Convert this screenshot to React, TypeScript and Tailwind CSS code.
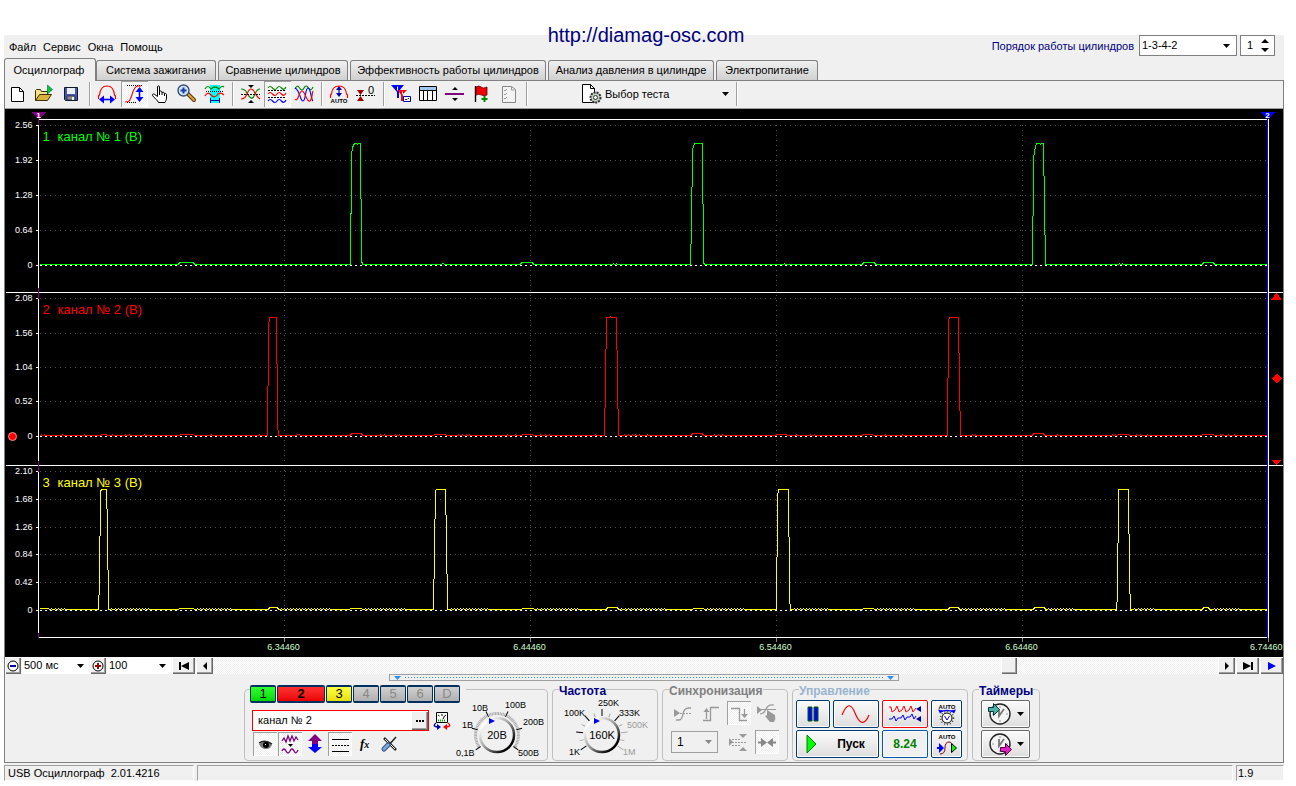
import clsx from "clsx";
import React from "react";

const DITHER =
  "bg-[repeating-conic-gradient(#ffffff_0_25%,#f0f0f0_0_50%)] bg-[length:2px_2px]";

const tabs = [
  { text: "Система зажигания", width: "w-[120px]" },
  { text: "Сравнение цилиндров", width: "w-[130px]" },
  { text: "Эффективность работы цилиндров", width: "w-[196px]" },
  { text: "Анализ давления в цилиндре", width: "w-[166px]" },
  { text: "Электропитание", width: "w-[102px]" },
];

type IconProps = { children: React.ReactNode; w?: number; h?: number };

const Icon = ({ children, w = 26, h = 24 }: IconProps) => (
  <svg width={w} height={h} viewBox={`0 0 ${w} ${h}`} fill="none" className="shrink-0">
    {children}
  </svg>
);

const Arrow = ({ className = "text-black" }: { className?: string }) => (
  <svg width="7" height="4" viewBox="0 0 7 4" className={clsx("pointer-events-none shrink-0", className)}>
    <path d="M0 0h7L3.5 4z" fill="currentColor" />
  </svg>
);

type ToolProps = { label: string; pressed?: boolean; children: React.ReactNode };

const Tool = ({ label, pressed, children }: ToolProps) => (
  <button
    aria-label={label}
    aria-pressed={pressed}
    className={clsx(
      "flex h-[26px] w-[27px] items-center",
      pressed && "shadow-[inset_1px_1px_0_#a0a0a0,inset_-1px_-1px_0_#ffffff]",
      pressed && DITHER
    )}
  >
    <Icon>{children}</Icon>
  </button>
);

const Separator = () => (
  <div className="flex h-6 w-2 justify-center">
    <div className="w-px bg-[#a0a0a0]" />
    <div className="w-px bg-white" />
  </div>
);

const Toolbar = () => (
  <div className="flex h-7 items-center border-b border-[#a0a0a0] pb-px">
    <Tool label="Новый">
      <path d="M6.5 5.5h8l4 4v10h-12z" fill="#fff" stroke="#000" />
      <path d="M14.5 5.5v4h4" stroke="#000" />
    </Tool>
    <Tool label="Открыть">
      <path d="M3.5 18.5v-10l1-1h4l1 2h6v4" fill="#f5e28c" stroke="#3a3000" />
      <path d="M3.5 18.5l4-6h12l-4 6z" fill="#d9b13c" stroke="#3a3000" />
      <path d="M15.500 3l5 4.500-5 4.500z" fill="#00cc33" stroke="#006040" strokeWidth=".6" />
    </Tool>
    <Tool label="Сохранить">
      <path d="M5.5 5.5h13v13h-12l-1-1z" fill="#4858a8" stroke="#101830" />
      <path d="M8 6h8v6H8z" fill="#e8eefc" />
      <path d="M8 14h8v4H8z" fill="#888" stroke="#101830" strokeWidth=".6" />
      <path d="M13 15h2v3h-2z" fill="#eee" />
    </Tool>
    <Separator />
    <Tool label="Ширина по курсорам">
      <path d="M4.500 17v-3l1-1c.5-5 3-9 7.500-9s7 4 7.500 9l1 1v3" stroke="#f00" strokeWidth="1.200" />
      <path d="M8 17.500h10" stroke="#00f" strokeWidth="1.600" />
      <path d="M5 17.500l5-4v8zM21 17.500l-5-4v8z" fill="#00f" />
    </Tool>
    <Tool label="Автомасштаб" pressed>
      <path d="M6 3.500h16M6 20.500h10" stroke="#000" strokeDasharray="1 1" />
      <path d="M4 20c5 0 5-2 6.500-6S13 4 17 4h3" stroke="#f00" strokeWidth="1.200" />
      <path d="M18.500 8v9" stroke="#00f" strokeWidth="1.600" />
      <path d="M18.500 5l-4 5h8zM18.500 20l-4-5h8z" fill="#00f" />
    </Tool>
    <Tool label="Рука">
      <path
        d="M9.500 14.500V5c0-1.500 2-1.500 2 0v5c0-1.500 2-1.300 2.500 0v1c.3-1.300 2-1 2.300.2v1c.4-1.200 2.200-1 2.200.6V16c0 2-1 3-1.500 4.500H10.500c-.8-2-3-3.500-5.800-6.700-1-1.500.8-2.500 2-1.400z"
        fill="#fff"
        stroke="#000"
      />
      <path d="M11.500 10v3M14 11v2M16.500 12v2" stroke="#000" />
    </Tool>
    <Tool label="Лупа">
      <path d="M13 12l6 6" stroke="#5b3c11" strokeWidth="4" strokeLinecap="round" />
      <path d="M13 12l6 6" stroke="#e0a030" strokeWidth="2" strokeLinecap="round" />
      <circle cx="8.500" cy="8.500" r="5.500" fill="#cfe4fb" stroke="#3a4f70" strokeWidth="1.400" />
      <path d="M8.500 5.500v6M5.500 8.500h6" stroke="#1040a0" strokeWidth="2" />
    </Tool>
    <Tool label="Выделение">
      <path d="M8 3h10v18H8z" fill="#0ff" />
      <path d="M3 7q2.500-5 6 0q4-4 8 0q3-4 5-2" stroke="#080" strokeWidth="1.200" />
      <path d="M4 9.500h18" stroke="#000" strokeDasharray="1 1" />
      <path d="M3 14q2.500-5 6-1q4 4 7-1q3-2 6 1" stroke="#f00" strokeWidth="1.200" />
      <path d="M8.500 16v5M17.500 16v5M9 18.500h8" stroke="#00a" />
    </Tool>
    <Separator />
    <Tool label="Наложить">
      <path d="M4 7q4 0 6 4t4 5 4-4 5-5" stroke="#080" strokeWidth="1.200" />
      <path d="M4 17q4 0 6-5t4-5 4 4 5 6" stroke="#f00" strokeWidth="1.200" />
      <path d="M4 12.500h19" stroke="#000" strokeDasharray="2 1" />
      <path d="M11 3h6l-3 3zM11 21h6l-3-3z" fill="#000" />
    </Tool>
    <Tool label="Разделить" pressed>
      <path d="M4 6q2-3 4.500 0t4.500 0 4.500 0 4.500-1" stroke="#080" strokeWidth="1.200" />
      <path d="M4 12q2-3 4.500 0t4.500 0 4.500 0 4.500-1" stroke="#f00" strokeWidth="1.200" />
      <path d="M4 19q2-3 4.500 0t4.500 0 4.500 0 4.500-1" stroke="#00f" strokeWidth="1.200" />
      <path d="M4 8.500h18M4 15.500h18" stroke="#000" strokeDasharray="2 1" />
    </Tool>
    <Tool label="Совместить">
      <path d="M4 7q2-5 4.500-1t4.500 0 4.500 0 4.500-1" stroke="#080" strokeWidth="1.200" />
      <path d="M4 6c5 2 5 13 8 13s2-13 5-13 3 12 5 13" stroke="#00f" strokeWidth="1.200" />
      <path d="M4 17c3 4 4-8 7-8s4 9 7 10 3-8 4-10" stroke="#f00" strokeWidth="1.200" />
    </Tool>
    <Separator />
    <Tool label="Авто">
      <path d="M4.500 16v-3l1-1c.5-5 3-8 7.500-8s7 3 7.500 8l1 1v3" stroke="#f00" strokeWidth="1.200" />
      <path d="M13 6v7" stroke="#00a" strokeWidth="1.200" />
      <path d="M13 4l-3 4h6zM13 15l-3-4h6z" fill="#00a" />
      <text x="13" y="21" fontSize="6" fontWeight="bold" fill="#000" textAnchor="middle">AUTO</text>
    </Tool>
    <Tool label="Ноль">
      <path d="M3 13.500h19" stroke="#000" strokeDasharray="2 1" />
      <path d="M4 8h7l-3.500 5zM4 19h7l-3.500-5z" fill="#900" />
      <text x="15" y="12" fontSize="11" fill="#000">0</text>
    </Tool>
    <Separator />
    <Tool label="Фильтр">
      <path d="M3 3h13l-5 6v7H9v-6z" fill="#00f" />
      <path d="M10 8h9l-4 4v7h-2v-6z" fill="#f00" />
      <path d="M9.500 4.500v4M14.500 9.500v3" stroke="#fff" />
      <path d="M15.500 14.500h7v5h-7z" fill="#fff" stroke="#00a" />
      <path d="M17 17.500h2l1-1h1" stroke="#000" strokeWidth=".8" />
    </Tool>
    <Tool label="Таблица">
      <path d="M4.500 4.500h17v14h-17z" fill="#fff" stroke="#000" />
      <path d="M5 5h16v3H5z" fill="#9cc8f0" />
      <path d="M5 8.500h16M8.500 8v10M12.500 8v10M17.500 8v10" stroke="#000" />
    </Tool>
    <Tool label="Линейка">
      <path d="M3 12h19" stroke="#800080" strokeWidth="2" />
      <path d="M10 8h6l-3-3zM10 16h6l-3 3z" fill="#000" />
    </Tool>
    <Tool label="Флаг">
      <path d="M6.500 4v16" stroke="#000" strokeWidth="1.400" />
      <path d="M7 5q3-2 5 0t6 0v8q-3 1.500-5.500 0T7 13z" fill="#e00" stroke="#600" strokeWidth=".8" />
      <path d="M15.500 14v6M12.500 17h6" stroke="#080" strokeWidth="2" />
    </Tool>
    <Tool label="Список">
      <path d="M6.500 4.500h9l4 3v13h-13z" fill="#f4f4f4" stroke="#888" />
      <path d="M8 8l1 1 2-2M8 12l1 1 2-2M8 16l1 1 2-2M15.500 5v3h3" stroke="#999" />
    </Tool>
    <Separator />
    <button className="flex h-6 w-[202px] items-center pr-1 pl-[50px]">
      <Icon w={22} h={22}>
        <path d="M1.500 1.500h8l4 4v14h-12z" fill="#fff" stroke="#000" />
        <path d="M9.500 1.500v4h4" stroke="#000" />
        <circle cx="14.500" cy="14.500" r="5" fill="#c4d2c4" stroke="#333" strokeWidth="2" strokeDasharray="2 1" />
        <circle cx="14.500" cy="14.500" r="2" fill="#fff" stroke="#333" />
      </Icon>
      <span className="flex-1 pl-0.5 text-left">Выбор теста</span>
      <Arrow />
    </button>
    <Separator />
  </div>
);

type Event = { x: number; points: number[][] };

/* Every trace lies on its base line; an event replaces the stretch it covers. */
const bump = (from: number, to: number, height: number): Event => ({
  x: from,
  points: [
    [from - 1, 0],
    [from, height],
    [to, height],
    [to + 1, 0],
  ],
});

const ticks = (xs: number[]) => xs.map((x) => bump(x, x, 1));

const noise = (from: number, to: number) => {
  const xs: number[] = [];
  for (let x = from; x < to; x += x % 3 ? 3 : 4) xs.push(x);
  return ticks(xs);
};

const pulse = (points: number[][]): Event => ({ x: points[0][0], points });

const toPoints = (base: number, events: Event[]) => {
  const body = [...events]
    .sort((a, b) => a.x - b.x)
    .flatMap((e) => e.points)
    .map(([x, h]) => `${x},${base - h}`);
  return [`39,${base}`, ...body, `1266,${base}`].join(" ");
};

const channels = [
  {
    name: "канал № 1 (В)",
    color: "#00ff00",
    labelY: 140,
    rows: [125, 160, 195, 230, 265],
    labels: ["2.56", "1.92", "1.28", "0.64", "0"],
    points: toPoints(264, [
      bump(179, 193, 2),
      pulse([[350, 0], [350, 51], [351, 51], [351, 109], [352, 117], [354, 121], [356, 121], [357, 120], [358, 121], [360, 121], [360, 66], [361, 65], [361, 4], [362, 0]]),
      bump(442, 443, 1),
      bump(521, 532, 2),
      ...ticks([613, 616]),
      pulse([[690, 0], [690, 20], [691, 21], [691, 77], [692, 78], [692, 115], [694, 121], [702, 121], [702, 61], [703, 60], [703, 2], [704, 0]]),
      ...ticks([784]),
      bump(863, 874, 2),
      pulse([[1032, 0], [1032, 48], [1033, 49], [1033, 106], [1035, 118], [1036, 121], [1039, 121], [1040, 120], [1041, 121], [1043, 121], [1043, 89], [1044, 88], [1044, 30], [1045, 29], [1045, 0]]),
      ...ticks([1119, 1122]),
      bump(1203, 1213, 2),
    ]),
  },
  {
    name: "канал № 2 (В)",
    color: "#ff0000",
    labelY: 313,
    rows: [298, 333, 367, 401, 436],
    labels: ["2.08", "1.56", "1.04", "0.52", "0"],
    points: toPoints(435, [
      ...ticks([41, 44, 62, 84, 112, 125, 129, 144, 211, 259]),
      bump(101, 106, 1),
      bump(180, 193, 1),
      pulse([[267, 0], [267, 49], [268, 50], [268, 108], [269, 118], [276, 118], [276, 72], [277, 71], [277, 12], [278, 0]]),
      bump(297, 299, 1),
      bump(351, 361, 2),
      ...ticks([380, 384, 395, 399, 458, 462, 466, 469, 507, 515]),
      bump(434, 445, 1),
      bump(522, 532, 1),
      ...ticks([540, 545, 549, 595]),
      pulse([[604, 0], [604, 27], [605, 28], [605, 86], [606, 87], [606, 118], [609, 118], [610, 119], [611, 118], [616, 118], [616, 86], [617, 85], [617, 27], [618, 26], [618, 0]]),
      ...ticks([624, 628, 632, 635, 639, 647]),
      bump(692, 702, 2),
      ...ticks([714, 718, 722]),
      bump(776, 786, 1),
      ...ticks([796, 810, 814, 885, 902]),
      bump(863, 872, 1),
      pulse([[947, 0], [947, 57], [948, 58], [948, 115], [949, 118], [958, 118], [958, 83], [959, 82], [959, 25], [960, 24], [960, 0]]),
      ...ticks([972, 975, 1057]),
      bump(1033, 1043, 2),
      ...ticks([1112, 1115, 1136, 1140, 1147]),
      bump(1118, 1128, 1),
      bump(1202, 1213, 1),
      ...ticks([1220, 1223, 1228, 1234]),
    ]),
  },
  {
    name: "канал № 3 (В)",
    color: "#ffff00",
    labelY: 486,
    rows: [471, 499, 527, 554, 582, 610],
    labels: ["2.10", "1.68", "1.26", "0.84", "0.42", "0"],
    points: toPoints(609, [
      bump(40, 48, 1),
      ...noise(51, 66),
      pulse([[98, 0], [98, 14], [99, 15], [99, 73], [100, 74], [100, 118], [101, 120], [106, 120], [106, 101], [107, 100], [107, 40], [108, 39], [108, 0]]),
      ...noise(111, 150),
      bump(179, 193, 1),
      ...noise(197, 232),
      bump(269, 277, 2),
      ...noise(281, 330),
      bump(350, 361, 1),
      ...noise(365, 405),
      pulse([[433, 0], [433, 30], [434, 31], [434, 90], [435, 91], [435, 119], [436, 120], [445, 120], [445, 95], [446, 94], [446, 36], [447, 35], [447, 0]]),
      ...noise(451, 490),
      bump(522, 533, 1),
      ...noise(537, 580),
      bump(607, 617, 2),
      ...noise(621, 665),
      bump(693, 703, 1),
      ...noise(707, 745),
      pulse([[776, 0], [776, 52], [777, 53], [777, 112], [778, 120], [788, 120], [788, 73], [789, 72], [789, 12], [790, 0]]),
      ...noise(794, 830),
      bump(863, 873, 1),
      ...noise(877, 915),
      bump(949, 958, 2),
      ...noise(962, 1005),
      bump(1034, 1044, 2),
      ...noise(1048, 1075),
      pulse([[1116, 0], [1116, 7], [1117, 8], [1117, 66], [1118, 67], [1118, 120], [1128, 120], [1128, 76], [1129, 75], [1129, 16], [1130, 15], [1130, 0]]),
      ...noise(1134, 1155),
      bump(1203, 1208, 2),
      ...noise(1214, 1240),
    ]),
  },
];

const times = [
  { x: 284, text: "6.34460" },
  { x: 530, text: "6.44460" },
  { x: 776, text: "6.54460" },
  { x: 1022, text: "6.64460" },
  { x: 1268, text: "6.74460", last: true },
];

const Scope = () => (
  <svg viewBox="4.5 108.5 1278 548" className="block h-auto w-full bg-black" shapeRendering="crispEdges" fill="none">
    {times.slice(0, 4).map((t) => (
      <path key={t.x} d={`M${t.x} 124V637`} stroke="#505050" strokeDasharray="1 4" />
    ))}
    {channels.map((c, index) => (
      <g key={c.name}>
        {c.rows.map((y, i) => (
          <g key={y}>
            {i < c.rows.length - 1 ? (
              <path d={`M39 ${y}H1267`} stroke="#505050" strokeDasharray="1 4" />
            ) : (
              <path d={`M39 ${y}H1267`} stroke="#fff" strokeDasharray="2 3" />
            )}
            <path d={`M35 ${y}h3`} stroke="#fff" />
            <text x="32" y={y + 2} fontSize="9" fill="#fff" textAnchor="end">
              {c.labels[i]}
            </text>
          </g>
        ))}
        <text x="42" y={c.labelY} fontSize="13" fill={c.color}>
          {index + 1}
        </text>
        <text x="57" y={c.labelY} fontSize="13" fill={c.color}>
          {c.name}
        </text>
        <polyline points={c.points} stroke={c.color} />
      </g>
    ))}
    <path d="M38 119H1268M5 292H1283M5 465H1283M38 637H1268" stroke="#fff" />
    <path d="M38 119V637M1268 119V637" stroke="#fff" />
    <path d="M1267 118V637" stroke="#0000ff" />
    <path d="M38 118V124M38 287V298M38 460V471M38 632V637" stroke="#800080" />
    {times.map((t) => (
      <g key={t.x}>
        <path d={`M${t.x} 637v4`} stroke="#888" />
        <text x={t.last ? 1282 : t.x - 1} y="649" fontSize="9" fill="#ccffcc" textAnchor={t.last ? "end" : "middle"}>
          {t.text}
        </text>
      </g>
    ))}
    <path d="M31 111h15l-7.500 8z" fill="#800080" />
    <text x="38" y="117" fontSize="8" fontWeight="bold" fill="#fff" textAnchor="middle">1</text>
    <path d="M1260 111h15l-7.500 8z" fill="#0000ff" />
    <text x="1267" y="117" fontSize="8" fontWeight="bold" fill="#fff" textAnchor="middle">2</text>
    <circle cx="12" cy="436" r="4" fill="#f00" stroke="#ff9090" shapeRendering="auto" />
    <path d="M1271 299h10l-5-7zM1271 459h10l-5 6zM1276 373l5 5-5 5-5-5z" fill="#f00" />
  </svg>
);

const RAISED =
  "bg-[#f0f0f0] shadow-[inset_1px_1px_0_#ffffff,inset_-1px_-1px_0_#696969,inset_-2px_-2px_0_#a0a0a0]";

type ScrollButtonProps = { label: string; width: string; children: React.ReactNode };

const ScrollButton = ({ label, width, children }: ScrollButtonProps) => (
  <button aria-label={label} className={clsx("flex h-[17px] items-center justify-center", RAISED, width)}>
    {children}
  </button>
);

type PickerProps = { label: string; value: string; className?: string; arrow?: string };

const Picker = ({ label, value, className, arrow }: PickerProps) => (
  <div className={clsx("relative flex items-center", className)}>
    <select
      aria-label={label}
      defaultValue={value}
      className="h-full w-full appearance-none bg-transparent pl-0.5 outline-none"
    >
      <option>{value}</option>
    </select>
    <div className="pointer-events-none absolute right-[5px]">
      <Arrow className={arrow} />
    </div>
  </div>
);

const ScrollRow = () => (
  <div className={clsx("flex h-[17px] gap-px", DITHER)}>
    <ScrollButton label="Сжать" width="w-4">
      <Icon w={12} h={12}>
        <circle cx="6" cy="6" r="5" fill="#fff" stroke="#000" />
        <path d="M3 6h6" stroke="#00a" strokeWidth="2" />
      </Icon>
    </ScrollButton>
    <Picker label="Развёртка" value="500 мс" className="w-[67px] bg-white text-[11px]" />
    <ScrollButton label="Растянуть" width="w-4">
      <Icon w={12} h={12}>
        <circle cx="6" cy="6" r="5" fill="#fff" stroke="#000" />
        <path d="M3 6h6M6 3v6" stroke="#900" strokeWidth="2" />
      </Icon>
    </ScrollButton>
    <Picker label="Масштаб" value="100" className="w-[64px] bg-white text-[11px]" />
    <ScrollButton label="В начало" width="w-[23px]">
      <Icon w={10} h={8}>
        <path d="M0 0h2v8H0zM2 4l8-4v8z" fill="#000" />
      </Icon>
    </ScrollButton>
    <ScrollButton label="Назад" width="w-[17px]">
      <Icon w={4} h={8}>
        <path d="M0 4l4-4v8z" fill="#000" />
      </Icon>
    </ScrollButton>
    <input
      type="range"
      aria-label="Прокрутка"
      min={0}
      max={1000}
      defaultValue={797}
      className="h-[17px] min-w-0 flex-1 appearance-none bg-transparent [&::-webkit-slider-thumb]:h-[17px] [&::-webkit-slider-thumb]:w-4 [&::-webkit-slider-thumb]:appearance-none [&::-webkit-slider-thumb]:bg-[#f0f0f0] [&::-webkit-slider-thumb]:shadow-[inset_1px_1px_0_#ffffff,inset_-1px_-1px_0_#696969,inset_-2px_-2px_0_#a0a0a0]"
    />
    <ScrollButton label="Вперёд" width="w-[17px]">
      <Icon w={4} h={8}>
        <path d="M4 4L0 0v8z" fill="#000" />
      </Icon>
    </ScrollButton>
    <ScrollButton label="В конец" width="w-[23px]">
      <Icon w={10} h={8}>
        <path d="M0 0l8 4-8 4zM8 0h2v8H8z" fill="#000" />
      </Icon>
    </ScrollButton>
    <ScrollButton label="Воспроизвести" width="w-[23px]">
      <Icon w={8} h={8}>
        <path d="M0 0l8 4-8 4z" fill="#00f" />
      </Icon>
    </ScrollButton>
  </div>
);

type GroupProps = { title?: string; color?: string; className?: string; children: React.ReactNode };

const Group = ({ title, color, className, children }: GroupProps) => (
  <section className={clsx("flex h-[72px] flex-col rounded-[4px] border border-[#c0c0c0]", className)}>
    {title && (
      <h2 className={clsx("-mt-[5px] ml-1.5 h-3 self-start bg-[#f0f0f0] text-[12px] leading-3 font-bold", color)}>
        {title}
      </h2>
    )}
    {children}
  </section>
);

type KnobProps = {
  value: string;
  origin: number;
  cx: number;
  dense?: boolean;
  labels: { x: number; y: number; text: string; dim?: boolean }[];
};

const Knob = ({ value, origin, cx, dense, labels }: KnobProps) => {
  const id = `rim-${cx}`;
  const count = dense ? 61 : 13;
  return (
    <svg width="94" height="60" viewBox={`${origin} 697 94 60`} fill="none" className="shrink-0">
      <defs>
        <linearGradient id={id} x1="0" y1="0" x2="1" y2="1">
          <stop offset="0.150" stopColor="#fff" />
          <stop offset="0.500" stopColor="#999" />
          <stop offset="0.850" stopColor="#000" />
        </linearGradient>
      </defs>
      {Array.from({ length: count }, (_, i) => {
        const step = dense ? 12 : 2;
        const angle = -125 + (250 / (count - 1)) * i;
        const major = i % step === 0;
        return (
          <path
            key={i}
            d={`M${cx} ${major ? 709 : 712}V${dense ? 715 : 716}`}
            stroke={major && (dense || angle < 60) ? "#000" : "#aaa"}
            transform={`rotate(${angle} ${cx} 735)`}
          />
        );
      })}
      <circle cx={cx} cy="735" r="17" fill="#f0f0f0" stroke={`url(#${id})`} strokeWidth="2.500" />
      <path d={`M${cx - 8} 718l6 3-6 3z`} fill="#0000ff" />
      <text x={cx} y="739" fontSize="11" fill="#000" textAnchor="middle">
        {value}
      </text>
      {labels.map((l) => (
        <text key={l.text} x={l.x} y={l.y} fontSize="9" fill={l.dim ? "#999" : "#000"}>
          {l.text}
        </text>
      ))}
    </svg>
  );
};

const channelButtons = [
  { text: "1", look: "w-[26px] bg-linear-to-b from-[#30ff30] to-[#00d800] text-black" },
  { text: "2", look: "w-12 bg-linear-to-b from-[#ff3030] to-[#e80000] font-bold text-black" },
  { text: "3", look: "w-[26px] bg-linear-to-b from-[#ffff40] to-[#e8e000] text-black" },
  { text: "4", look: "w-[26px] bg-linear-to-b from-[#d0d0d0] to-[#b0b0b0] text-[#888888]" },
  { text: "5", look: "w-[26px] bg-linear-to-b from-[#d0d0d0] to-[#b0b0b0] text-[#888888]" },
  { text: "6", look: "w-[26px] bg-linear-to-b from-[#d0d0d0] to-[#b0b0b0] text-[#888888]" },
  { text: "D", look: "w-[26px] bg-linear-to-b from-[#d0d0d0] to-[#b0b0b0] text-[#888888]" },
];

type SmallToolProps = { label: string; pressed?: boolean; children: React.ReactNode };

const SmallTool = ({ label, pressed, children }: SmallToolProps) => (
  <button
    aria-label={label}
    aria-pressed={pressed}
    className={clsx(
      "size-6 shrink-0",
      pressed && "shadow-[inset_1px_1px_0_#a0a0a0,inset_-1px_-1px_0_#ffffff]",
      pressed && DITHER
    )}
  >
    <Icon w={24} h={24}>
      {children}
    </Icon>
  </button>
);

const ChannelGroup = () => (
  <Group className="w-[304px]">
    <div className="flex justify-between pr-px">
      <div className="flex w-[208px] flex-col">
        <div className="-mt-[5px] ml-[5px] flex w-[216px] gap-px bg-[#f0f0f0] text-[13px]">
          {channelButtons.map((b) => (
            <button
              key={b.text}
              className={clsx("h-[18px] shrink-0 rounded-xs border border-y-2 border-[#003060] leading-3", b.look)}
            >
              {b.text}
            </button>
          ))}
        </div>
        <div className="mt-[7px] ml-[7px] flex items-center gap-1">
          <div className="flex h-[21px] w-[177px] border border-[#ff0000] bg-white">
            <input
              aria-label="Имя канала"
              defaultValue="канал № 2"
              className="min-w-0 flex-1 bg-transparent pl-[5px] text-[11px] outline-none"
            />
            <button aria-label="Изменить имя" className={clsx("flex h-[19px] w-[17px] items-center justify-center", RAISED)}>
              <Icon w={8} h={2}>
                <path d="M0 0h2v2H0zM3 0h2v2H3zM6 0h2v2H6z" fill="#000" />
              </Icon>
            </button>
          </div>
          <button aria-label="Сменить вход" className="shrink-0">
            <Icon w={19} h={20}>
              <path d="M3.500 1.500h11v10h-11z" fill="#fff" stroke="#000" />
              <path d="M5 4l1.500 1M9 3v2M13 4l-1.500 1M10 8l1.500-3" stroke="#000" />
              <path d="M5 9.500h8" stroke="#0a0" strokeDasharray="1 1" strokeWidth="2" />
              <path d="M3 12q-4 3 1 4" stroke="#00a" strokeWidth="1.300" />
              <path d="M4 13l4 3-4 3z" fill="#00a" />
              <path d="M15 12q4 3-1 4" stroke="#f00" strokeWidth="1.300" />
              <path d="M14 13l-4 3 4 3z" fill="#f00" />
            </Icon>
          </button>
        </div>
        <div className="mt-px ml-2 flex gap-px">
          <SmallTool label="Видимость" pressed>
            <path d="M6 12q6-5 13 0-1 5-6 5t-7-5z" fill="#777" />
            <path d="M6 11q6-4 13 1" stroke="#222" strokeWidth="1.500" />
            <circle cx="13" cy="13" r="3" fill="#000" />
            <path d="M12 12h1v1h-1z" fill="#fff" />
          </SmallTool>
          <SmallTool label="Фильтр" pressed>
            <path d="M4 9l2-3 2 4 2-6 2 5 2-5 2 5 2-4 2 3" stroke="#800080" strokeWidth="1.300" />
            <path d="M10 12h5l-2.500 3z" fill="#000" />
            <path d="M4 19q2-4 4 0t4 0 4 0 4-1" stroke="#800080" strokeWidth="1.300" />
          </SmallTool>
          <SmallTool label="Сдвиг">
            <path d="M12 2l7 7h-4v3H9V9H5z" fill="#800080" />
            <path d="M12 21l7-6h-4v-3H9v3H5z" fill="#0000ff" />
          </SmallTool>
          <SmallTool label="Линии" pressed>
            <path d="M4 7.500h17M4 19.500h17" stroke="#000" />
            <path d="M4 13.500h17" stroke="#000" strokeDasharray="2 1" />
          </SmallTool>
          <SmallTool label="Функция">
            <text x="7" y="16" fontSize="13" fontWeight="bold" fontStyle="italic" fontFamily="Liberation Serif, serif" fill="#000">
              f
              <tspan fontSize="10">x</tspan>
            </text>
          </SmallTool>
          <SmallTool label="Настройки">
            <path d="M6 6l12 12" stroke="#222" strokeWidth="2.500" />
            <path d="M7 7l10 10" stroke="#eee" />
            <path d="M18 5l-8 9" stroke="#222" strokeWidth="1.500" />
            <path d="M10 13l-4 4" stroke="#30507c" strokeWidth="5" strokeLinecap="round" />
            <path d="M10 13l-4 4" stroke="#7fa5dc" strokeWidth="3" strokeLinecap="round" />
          </SmallTool>
        </div>
      </div>
      <div className="mt-[7px]">
        <Knob
          value="20В"
          origin={454}
          cx={498}
          dense
          labels={[
            { x: 457, y: 756, text: "0,1В" },
            { x: 463, y: 728, text: "1В" },
            { x: 473, y: 711, text: "10В" },
            { x: 506, y: 708, text: "100В" },
            { x: 524, y: 725, text: "200В" },
            { x: 519, y: 756, text: "500В" },
          ]}
        />
      </div>
    </div>
  </Group>
);

const SyncGroup = () => (
  <Group title="Синхронизация" color="text-[#808080]" className="w-[126px]">
    <div className="flex flex-col gap-[5px] px-2 pt-1">
      <div className="flex justify-between">
        <SmallTool label="По уровню">
          <path d="M3 8l6 4-6 4z" fill="#999" />
          <path d="M3 12.500h18" stroke="#999" strokeDasharray="2 1" />
          <path d="M5 19h3q3 0 4-6t6-6h2" stroke="#999" strokeWidth="1.300" />
        </SmallTool>
        <SmallTool label="По фронту">
          <path d="M4 19.500h7.500v-13H20M7.500 18v-8" stroke="#999" strokeWidth="1.300" />
          <path d="M4.500 11h6l-3-4z" fill="#999" />
        </SmallTool>
        <SmallTool label="По спаду" pressed>
          <path d="M4 7.500h8.500v12H20M17.500 8v7" stroke="#999" strokeWidth="1.300" />
          <path d="M14 13h7l-3.500 4z" fill="#999" />
        </SmallTool>
        <SmallTool label="Ручная">
          <path d="M2 5l5 4-5 4z" fill="#999" />
          <path d="M3 8.500h18M5 13q4 0 6-5t8-4" stroke="#999" strokeWidth="1.200" />
          <path d="M12 9l8 5q1 4-1 7h-4l-5-6 2-1z" fill="#999" />
        </SmallTool>
      </div>
      <div className="flex items-center justify-between">
        <Picker
          label="Канал синхронизации"
          value="1"
          arrow="text-[#888888]"
          className="mr-1 h-[22px] w-[47px] border border-[#a0a0a0] pl-[3px] text-[12px]"
        />
        <SmallTool label="Окно">
          <path d="M2 8l4 4-4 4z" fill="#999" />
          <path d="M5 9.500h9M5 15.500h9M5 12.500h15" stroke="#999" strokeDasharray="2 1" />
          <path d="M12 4h8l-4 4zM12 21h8l-4-4z" fill="#999" />
        </SmallTool>
        <SmallTool label="К центру" pressed>
          <path d="M3 12.500h5M21 12.500h-5" stroke="#888" strokeWidth="2" />
          <path d="M6 8l6 4.500L6 17zM18 8l-6 4.500 6 4.500z" fill="#888" />
        </SmallTool>
      </div>
    </div>
  </Group>
);

type CommandProps = { label?: string; look: string; children: React.ReactNode };

const Command = ({ label, look, children }: CommandProps) => (
  <button
    aria-label={label}
    className={clsx("flex h-7 items-center justify-center rounded-xs border shadow-[inset_0_0_0_1px_#ffffff]", look)}
  >
    {children}
  </button>
);

const NAVY_EDGE = "border-[#003c74] bg-linear-to-b from-[#fafafa] to-[#dedede]";

const ControlGroup = () => (
  <Group title="Управление" color="text-[#99b4d1]" className="w-[176px]">
    <div className="flex flex-col gap-0.5 pt-[3px] pl-[3px]">
      <div className="flex gap-[3px]">
        <Command label="Пауза" look={clsx("w-[34px]", NAVY_EDGE)}>
          <Icon w={12} h={16}>
            <path d="M1 1h4v14H1zM7 1h4v14H7z" fill="#0000ff" stroke="#006000" />
          </Icon>
        </Command>
        <Command label="Сигнал" look={clsx("w-[46px]", NAVY_EDGE)}>
          <Icon w={30} h={20}>
            <path d="M1 11C6-1 10-1 14 9s9 14 14 2" stroke="#f00" strokeWidth="1.200" />
          </Icon>
        </Command>
        <Command label="Осциллограммы" look="w-[46px] border-[#ff0000] bg-linear-to-b from-[#fafafa] to-[#dedede]">
          <Icon w={34} h={20}>
            <path d="M1 3h2l1 5 3-2 2-4 2 6 3-2 2-4 2 6 3-2 2-4 2 6 3-4" stroke="#f00" />
            <path d="M1 15h3l2-3 2 5 2-3h3l2-3 2 5 2-3h3l2-3 2 5 2-3" stroke="#00f" />
            <path d="M28 5l5-3v6zM28 15l5-3v6z" fill="#00a" />
          </Icon>
        </Command>
        <Command label="Автонастройка" look={clsx("w-[31px]", NAVY_EDGE)}>
          <Icon w={24} h={24}>
            <text x="12" y="7" fontSize="6" fontWeight="bold" fill="#000" textAnchor="middle">AUTO</text>
            <path d="M5 10q7-3 14 0" stroke="#00f" strokeWidth="1.500" />
            <path d="M3 7.500l5 1-3 3zM21 7.500l-5 1 3 3z" fill="#00f" />
            <circle cx="12" cy="16" r="6.500" stroke="#444" strokeWidth="1.500" strokeDasharray="1 2" />
            <circle cx="12" cy="16" r="5" fill="#fff" stroke="#000" />
            <path d="M9.500 14l2.500 4 2.500-4" stroke="#00f" />
          </Icon>
        </Command>
      </div>
      <div className="flex gap-[3px]">
        <Command look={clsx("w-[83px] text-[12px] font-bold", NAVY_EDGE)}>
          <Icon w={11} h={20}>
            <path d="M1 1l9 9-9 9z" fill="#00ff00" stroke="#008000" />
          </Icon>
          <span className="pr-1 pl-5">Пуск</span>
        </Command>
        <Command look="w-[46px] border-[#0058b0] bg-[#f0f0f0] text-[12px] font-bold text-[#008000]">8.24</Command>
        <Command label="Автозапуск" look={clsx("w-[31px]", NAVY_EDGE)}>
          <Icon w={24} h={24}>
            <text x="12" y="7" fontSize="6" fontWeight="bold" fill="#000" textAnchor="middle">AUTO</text>
            <path d="M2 16h4" stroke="#00f" strokeWidth="2" />
            <path d="M4 11l5 5-5 5z" fill="#00f" />
            <path d="M5 22q5 0 5-6t4-6 3 6" stroke="#800000" />
            <path d="M16.500 11.500l5 4.500-5 4.500z" fill="#0f0" stroke="#000" />
          </Icon>
        </Command>
      </div>
    </div>
  </Group>
);

const Clock = ({ children }: { children: React.ReactNode }) => (
  <Icon w={26} h={24}>
    <circle cx="13" cy="12" r="10" fill="#f4f4f4" stroke="#222" strokeWidth="1.400" />
    <path d="M13 4v2M13 18v2M5 12h2M19 12h2" stroke="#999" />
    <path d="M12 7v7l5-7" stroke="#777" strokeWidth="1.800" />
    {children}
  </Icon>
);

const TimerGroup = () => (
  <Group title="Таймеры" color="text-[#000080]" className="w-[68px]">
    <div className="flex flex-col gap-0.5 pt-[3px] pl-2">
      <Command label="Таймер пуска" look="w-[49px] gap-1 border-[#696969] bg-linear-to-b from-[#fafafa] to-[#dedede]">
        <Clock>
          <path d="M1.500 5.500h5v-4l6 6-6 6v-4h-5z" fill="#50b0a8" stroke="#003838" />
        </Clock>
        <Arrow />
      </Command>
      <Command label="Таймер остановки" look="w-[49px] gap-1 border-[#696969] bg-linear-to-b from-[#fafafa] to-[#dedede]">
        <Clock>
          <path d="M13.500 15.500h5v-4l6 6-6 6v-4h-5z" fill="#e020c0" stroke="#500040" />
        </Clock>
        <Arrow />
      </Command>
    </div>
  </Group>
);

const Header = () => (
  <header className="flex h-[23px] items-start justify-between pr-[9px]">
    <nav className="flex gap-[7px] pt-1 pl-[5px] leading-4">
      {["Файл", "Сервис", "Окна", "Помощь"].map((item) => (
        <a key={item} href="#">
          {item}
        </a>
      ))}
    </nav>
    <div className="flex">
      <label htmlFor="order" className="pt-[3px] pr-[5px] leading-4 text-[#000080]">
        Порядок работы цилиндров
      </label>
      <div className="relative flex h-[21px] w-[98px] items-center border border-[#808080] bg-white">
        <select id="order" defaultValue="1-3-4-2" className="h-full w-full appearance-none bg-transparent pl-0.5 text-[11px] outline-none">
          <option>1-3-4-2</option>
        </select>
        <div className="pointer-events-none absolute right-[6px]">
          <Arrow />
        </div>
      </div>
      <div className="ml-[3px] flex h-[21px] w-[35px] items-center border border-[#808080] bg-white">
        <input aria-label="Номер цилиндра" defaultValue="1" className="w-5 pl-1.5 text-[11px] outline-none" />
        <Icon w={8} h={14}>
          <path d="M0 4h8L4 0zM0 9h8l-4 4z" fill="#000" />
        </Icon>
      </div>
    </div>
  </header>
);

const App = () => {
  return (
    <div className="relative bg-white pt-[35px] pr-3 pb-[5px] pl-1 font-['Liberation_Sans',Arial,sans-serif] text-[11px] text-black">
      <a href="#" className="absolute inset-x-0 top-6 pr-1 text-center text-[20px] leading-[23px] text-[#000080]">
        http://diamag-osc.com
      </a>
      <div className="bg-[#f0f0f0]">
        <Header />
        <div role="tablist" className="flex h-[22px] items-end gap-0.5">
          <button
            role="tab"
            aria-selected
            className="relative -mr-0.5 -mb-px h-[23px] w-[92px] rounded-t-[3px] border border-b-0 border-[#808080] bg-[#f0f0f0] pr-0.5"
          >
            Осциллограф
          </button>
          {tabs.map((tab) => (
            <button
              key={tab.text}
              role="tab"
              className={clsx(
                "h-5 rounded-t-[3px] border border-b-0 border-[#808080] bg-linear-to-b from-[#f0f0f0] to-[#d0d0d0] whitespace-nowrap",
                tab.width
              )}
            >
              {tab.text}
            </button>
          ))}
        </div>
        <main className="border border-[#808080]">
          <Toolbar />
          <Scope />
          <ScrollRow />
          <div className="mx-auto flex h-[7px] w-[510px] items-center justify-between gap-1 border border-[#a0a0a0] px-1">
            <Arrow className="text-[#3090f0]" />
            <div className="h-px flex-1 bg-[repeating-linear-gradient(90deg,#3090f0_0_1px,transparent_1px_3px)]" />
            <Arrow className="text-[#3090f0]" />
          </div>
          <div className="flex justify-center gap-1 pt-2 pr-1 pb-px">
            <ChannelGroup />
            <Group title="Частота" color="text-[#000080]" className="w-[106px]">
              <div className="ml-[7px]">
                <Knob
                  value="160K"
                  origin={560}
                  cx={602}
                  labels={[
                    { x: 569, y: 755, text: "1K" },
                    { x: 564, y: 716, text: "100K" },
                    { x: 598, y: 706, text: "250K" },
                    { x: 619, y: 716, text: "333K" },
                    { x: 627, y: 728, text: "500K", dim: true },
                    { x: 623, y: 755, text: "1M", dim: true },
                  ]}
                />
              </div>
            </Group>
            <SyncGroup />
            <ControlGroup />
            <TimerGroup />
          </div>
        </main>
        <footer className="flex gap-[3px] pt-0.5 leading-4">
          <div className="h-4 w-[190px] border border-[#a0a0a0] border-r-white border-b-white pl-[3px] leading-[15px]">
            USB Осциллограф&nbsp; 2.01.4216
          </div>
          <div className="h-4 flex-1 border border-[#a0a0a0] border-r-white border-b-white" />
          <div className="h-4 w-12 border border-[#a0a0a0] border-r-white border-b-white pl-px leading-[15px]">1.9</div>
        </footer>
      </div>
    </div>
  );
};

export default App;
